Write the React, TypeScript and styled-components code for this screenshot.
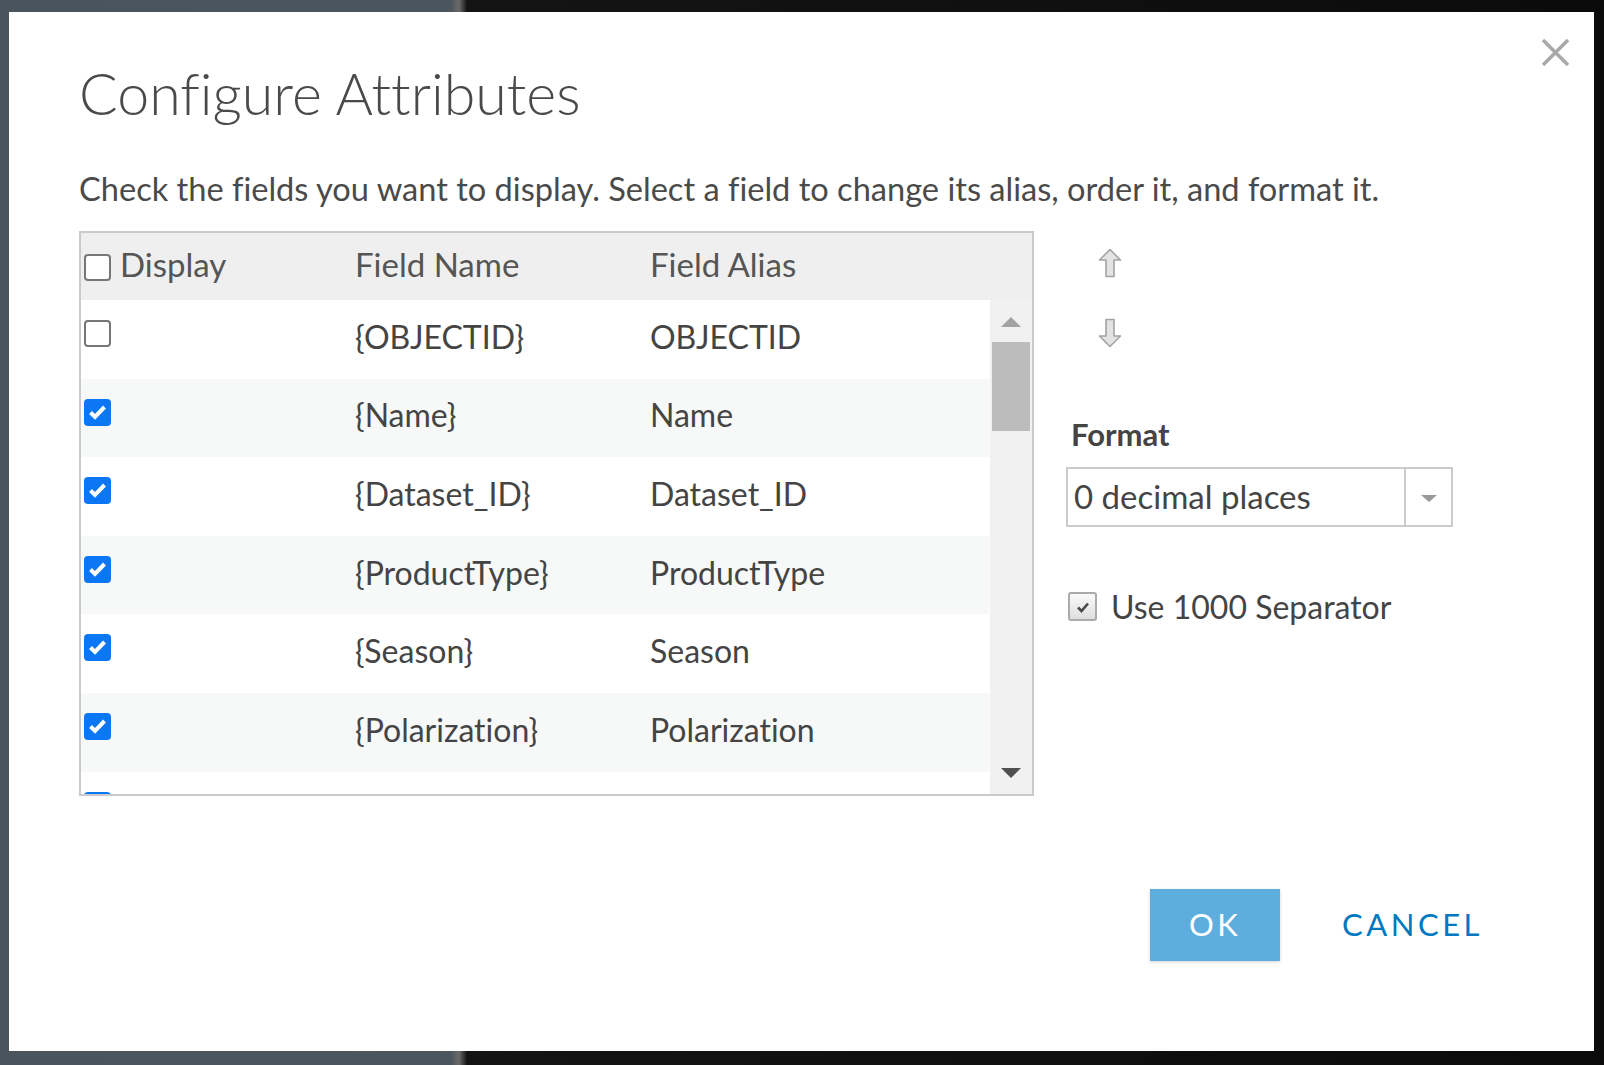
import React from "react";
import styled, { createGlobalStyle } from "styled-components";

const GlobalStyle = createGlobalStyle`
  html, body {
    margin: 0;
    padding: 0;
  }
  body {
    width: 1604px;
    height: 1065px;
    overflow: hidden;
    background: linear-gradient(
      to right,
      #4a545c 0,
      #4b555d 451px,
      #6a6a6a 459px,
      #141414 467px,
      #0b0b0b 100%
    );
    font-family: Lato, "Open Sans", "Liberation Sans", sans-serif;
    font-variant-ligatures: none;
    color: #444;
  }
`;

const FIELDS = [
  { name: "OBJECTID", checked: false },
  { name: "Name", checked: true },
  { name: "Dataset_ID", checked: true },
  { name: "ProductType", checked: true },
  { name: "Season", checked: true },
  { name: "Polarization", checked: true },
];

const CheckBox = ({ checked }: { checked: boolean }) => (
  <Box $checked={checked}>
    {checked ? (
      <svg width="27" height="27" viewBox="0 0 27 27">
        <path
          d="M6.5 13.5 L11 18 L20.5 8"
          fill="none"
          stroke="#fff"
          strokeWidth="4"
        />
      </svg>
    ) : null}
  </Box>
);

const UpArrow = () => (
  <svg width="24" height="30" viewBox="0 0 24 30">
    <polygon
      points="12,1.5 22.5,12 16,12 16,28.5 8,28.5 8,12 1.5,12"
      fill="#e3e3e3"
      stroke="#a3a3a3"
      strokeWidth="1.6"
      strokeLinejoin="round"
    />
  </svg>
);

const DownArrow = () => (
  <svg width="24" height="30" viewBox="0 0 24 30">
    <polygon
      points="12,28.5 22.5,18 16,18 16,1.5 8,1.5 8,18 1.5,18"
      fill="#e3e3e3"
      stroke="#a3a3a3"
      strokeWidth="1.6"
      strokeLinejoin="round"
    />
  </svg>
);

const App = () => {
  return (
    <>
      <GlobalStyle />
      <Page>
        <Modal>
          <Header>
            <Title>Configure Attributes</Title>
            <CloseButton aria-label="Close">
              <svg width="29" height="29" viewBox="0 0 29 29">
                <path
                  d="M2 2 L27 27 M27 2 L2 27"
                  stroke="#a9a9a9"
                  strokeWidth="3.6"
                />
              </svg>
            </CloseButton>
          </Header>
          <Description>
            Check the fields you want to display. Select a field to change its
            alias, order it, and format it.
          </Description>
          <Content>
            <Table>
              <HeadRow>
                <DisplayHead>
                  <CheckBox checked={false} />
                  <HeadLabel>Display</HeadLabel>
                </DisplayHead>
                <HeadCell>Field Name</HeadCell>
                <HeadCell>Field Alias</HeadCell>
              </HeadRow>
              <Body>
                <Rows>
                  {FIELDS.map((f, i) => (
                    <Row key={f.name} $alt={i % 2 === 1}>
                      <CheckCell>
                        <CheckBox checked={f.checked} />
                      </CheckCell>
                      <Cell>{`{${f.name}}`}</Cell>
                      <Cell>{f.name}</Cell>
                    </Row>
                  ))}
                  {/* next row, scrolled mostly out of view */}
                  <Row>
                    <CheckCell>
                      <CheckBox checked />
                    </CheckCell>
                  </Row>
                </Rows>
                <Scrollbar>
                  <ScrollArrow $up $dim />
                  <Thumb />
                  <Spacer />
                  <ScrollArrow />
                </Scrollbar>
              </Body>
            </Table>
            <SidePanel>
              <OrderButtons>
                <IconButton aria-label="Move up">
                  <UpArrow />
                </IconButton>
                <IconButton aria-label="Move down">
                  <DownArrow />
                </IconButton>
              </OrderButtons>
              <Label>Format</Label>
              <Select>
                <SelectValue>0 decimal places</SelectValue>
                <SelectToggle>
                  <Caret />
                </SelectToggle>
              </Select>
              <SeparatorOption>
                <SoftBox>
                  <svg width="18" height="18" viewBox="0 0 18 18">
                    <path
                      d="M4 9.5 L7.5 13 L14 5.5"
                      fill="none"
                      stroke="#4a4a4a"
                      strokeWidth="2.6"
                    />
                  </svg>
                </SoftBox>
                <span>Use 1000 Separator</span>
              </SeparatorOption>
            </SidePanel>
          </Content>
          <Footer>
            <PrimaryButton>OK</PrimaryButton>
            <LinkButton>CANCEL</LinkButton>
          </Footer>
        </Modal>
      </Page>
    </>
  );
};

const Page = styled.div`
  box-sizing: border-box;
  width: 1604px;
  height: 1065px;
  padding: 12px 10px 14px 9px;
`;

const Modal = styled.div`
  box-sizing: border-box;
  width: 1585px;
  height: 1039px;
  background: #fff;
  padding: 26px 24px 0 70px;
  display: flex;
  flex-direction: column;
`;

const Header = styled.header`
  display: flex;
  justify-content: space-between;
  align-items: flex-start;
`;

const Title = styled.h1`
  margin: 26px 0 0 0;
  font-size: 57.3px;
  line-height: 57px;
  font-weight: 300;
  color: #4a4a4a;
`;

const CloseButton = styled.button`
  border: 0;
  padding: 0;
  background: none;
  width: 29px;
  height: 29px;
  display: flex;
  cursor: pointer;
`;

const Description = styled.p`
  margin: 52px 0 0 0;
  font-size: 32.6px;
  line-height: 31px;
  color: #4a4a4a;
`;

const Content = styled.div`
  margin-top: 27px;
  display: flex;
  gap: 32px;
`;

const Table = styled.div`
  box-sizing: border-box;
  width: 955px;
  height: 565px;
  border: 2px solid #cacaca;
  display: flex;
  flex-direction: column;
`;

const columns = `274px 295px 1fr`;

const HeadRow = styled.div`
  height: 67px;
  flex: none;
  background: #efefef;
  display: grid;
  grid-template-columns: ${columns};
  align-items: center;
  font-size: 33px;
  color: #555;
`;

const DisplayHead = styled.div`
  display: flex;
  align-items: center;
  gap: 9px;
  padding-left: 3px;
  padding-top: 2px;
`;

const HeadLabel = styled.span`
  margin-bottom: 8px;
`;

const HeadCell = styled.div`
  padding-bottom: 5px;
`;

const Body = styled.div`
  flex: 1;
  display: flex;
  overflow: hidden;
`;

const Rows = styled.div`
  flex: 1;
  margin-right: 1px;
  overflow: hidden;
`;

const Row = styled.div<{ $alt?: boolean }>`
  height: 78.6px;
  display: grid;
  grid-template-columns: ${columns};
  align-items: center;
  background: ${(p) => (p.$alt ? "#f7f8f8" : "#fff")};
  font-size: 32px;
  color: #444;
`;

const CheckCell = styled.div`
  align-self: start;
  padding: 20px 0 0 3px;
`;

const Cell = styled.div`
  padding-bottom: 6px;
`;

const Box = styled.span<{ $checked: boolean }>`
  box-sizing: border-box;
  width: 27px;
  height: 27px;
  flex: none;
  display: flex;
  border-radius: 4px;
  border: ${(p) => (p.$checked ? "0" : "2px solid #767676")};
  background: ${(p) => (p.$checked ? "#0c77f4" : "#fff")};
`;

const Scrollbar = styled.div`
  width: 42px;
  flex: none;
  background: #f1f1f1;
  display: flex;
  flex-direction: column;
  align-items: center;
  padding: 17px 0 16px;
  box-sizing: border-box;
`;

const ScrollArrow = styled.span<{ $up?: boolean; $dim?: boolean }>`
  width: 0;
  height: 0;
  border-left: 10px solid transparent;
  border-right: 10px solid transparent;
  ${(p) =>
    p.$up
      ? `border-bottom: 10px solid ${p.$dim ? "#a3a3a3" : "#505050"};`
      : `border-top: 10px solid ${p.$dim ? "#a3a3a3" : "#505050"};`}
`;

const Thumb = styled.div`
  margin-top: 15px;
  width: 38px;
  height: 89px;
  background: #bcbcbc;
`;

const Spacer = styled.div`
  flex: 1;
`;

const SidePanel = styled.div`
  display: flex;
  flex-direction: column;
  align-items: flex-start;
`;

const OrderButtons = styled.div`
  margin: 17px 0 0 32px;
  display: flex;
  flex-direction: column;
  gap: 40px;
`;

const IconButton = styled.button`
  border: 0;
  padding: 0;
  background: none;
  display: flex;
  cursor: pointer;
`;

const Label = styled.div`
  margin-top: 71px;
  padding-left: 5px;
  font-size: 31px;
  line-height: 31px;
  font-weight: 700;
  color: #444;
`;

const Select = styled.div`
  margin-top: 17px;
  box-sizing: border-box;
  width: 387px;
  height: 60px;
  border: 2px solid #cbcbcb;
  display: flex;
`;

const SelectValue = styled.div`
  flex: 1;
  display: flex;
  align-items: center;
  padding: 0 0 3px 6px;
  font-size: 33px;
  color: #444;
`;

const SelectToggle = styled.div`
  width: 45px;
  border-left: 2px solid #cbcbcb;
  display: flex;
  align-items: center;
  justify-content: center;
`;

const Caret = styled.span`
  width: 0;
  height: 0;
  margin-top: 3px;
  border-left: 8px solid transparent;
  border-right: 8px solid transparent;
  border-top: 7px solid #999;
`;

const SeparatorOption = styled.label`
  margin-top: 60px;
  padding-left: 2px;
  display: flex;
  align-items: center;
  gap: 14px;
  font-size: 32px;
  color: #444;
`;

const SoftBox = styled.span`
  box-sizing: border-box;
  width: 29px;
  height: 29px;
  border: 2px solid #ababab;
  border-radius: 3px;
  background: linear-gradient(#fafafa, #dedede);
  display: flex;
  align-items: center;
  justify-content: center;
`;

const Footer = styled.footer`
  margin-top: 93px;
  display: flex;
  justify-content: flex-end;
  gap: 22px;
  padding-right: 47px;
`;

const BaseButton = styled.button`
  height: 72px;
  border: 0;
  font-family: Lato, "Open Sans", "Liberation Sans", sans-serif;
  font-size: 31px;
  letter-spacing: 3.5px;
  padding: 0 40px 3px;
  cursor: pointer;
`;

const PrimaryButton = styled(BaseButton)`
  width: 130px;
  padding: 0 0 3px;
  background: #5daddf;
  color: #fff;
  box-shadow: 0 1px 3px rgba(0, 0, 0, 0.18);
`;

const LinkButton = styled(BaseButton)`
  background: none;
  color: #0079c1;
`;

export default App;
